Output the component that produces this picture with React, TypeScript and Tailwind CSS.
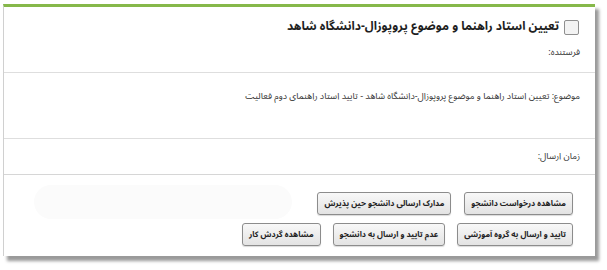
const btn =
  "h-[23px] rounded-[3px] border border-[#8c8c8c] bg-gradient-to-b from-[#f8f8f8] to-[#e3e3e3] px-[6px] text-[8px] leading-none font-bold text-[#222] shadow-[0_1px_1px_rgba(0,0,0,0.15)] whitespace-nowrap";

export default function App() {
  return (
    <div
      dir="rtl"
      className="h-[270px] w-[607px] bg-white pl-[3px] pr-[12px] pt-[4px] font-['Noto_Sans_Arabic','DejaVu_Sans',sans-serif]"
    >
      <div className="relative flex h-[252px] w-[592px] flex-col border-t-[3px] border-l border-t-[#86b84a] border-l-[#d0d0d0] bg-white shadow-[4px_5px_3px_#9a9a9a]">
        {/* عنوان */}
        <div className="flex h-[32px] items-center gap-[5px] pr-[16px] pt-[8px]">
          <span className="h-[15px] w-[15px] shrink-0 rounded-[2px] border border-[#8f8f8f] bg-[#f3f3f3]" />
          <h1 className="text-[12px] font-bold leading-none text-[#1e1e1e]">
            تعیین استاد راهنما و موضوع پروپوزال-دانشگاه شاهد
          </h1>
        </div>
        <div className="h-[33px] pr-[15px] pt-[7px] text-[9px] leading-[14px] text-[#333]">
          فرستنده:
        </div>

        <div className="h-[66px] border-t border-[#dedede] pr-[15px] pt-[17px] text-[9px] leading-[14px] text-[#333]">
          موضوع: تعیین استاد راهنما و موضوع پروپوزال-دانشگاه شاهد - تایید استاد راهنمای دوم فعالیت
        </div>

        <div className="h-[36px] border-t border-[#dedede] pr-[15px] pt-[11px] text-[9px] leading-[14px] text-[#333]">
          زمان ارسال:
        </div>

        <div className="relative flex flex-1 flex-col gap-[8px] border-t border-[#d6d6d6] pr-[22px] pt-[17px]">
          <div className="absolute left-[30px] top-[10px] h-[34px] w-[258px] rounded-[17px] bg-[#fbfbfb]" />
          <div className="relative flex gap-[13px]">
            <button className={btn}>مشاهده درخواست دانشجو</button>
            <button className={btn}>مدارک ارسالی دانشجو حین پذیرش</button>
          </div>
          <div className="relative flex gap-[12px]">
            <button className={btn}>تایید و ارسال به گروه آموزشی</button>
            <button className={btn}>عدم تایید و ارسال به دانشجو</button>
            <button className={btn}>مشاهده گردش کار</button>
          </div>
        </div>
      </div>
    </div>
  );
}
